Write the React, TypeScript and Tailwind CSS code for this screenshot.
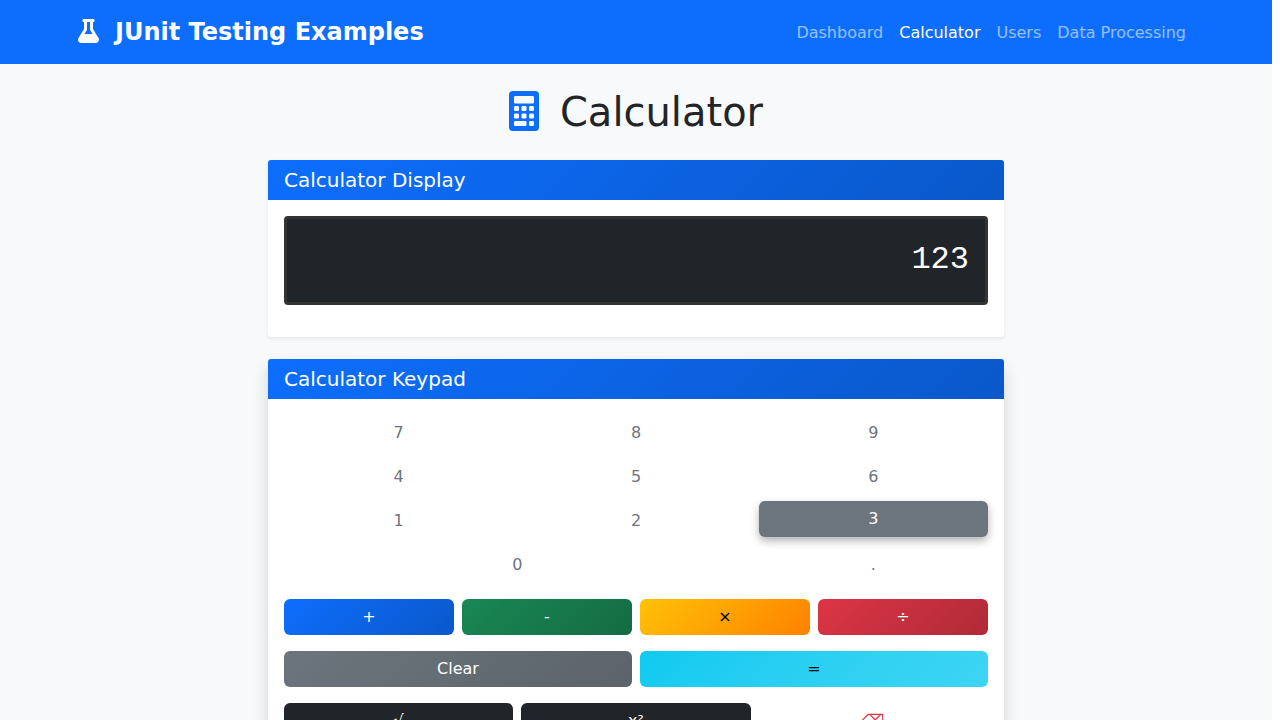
import { useState } from "react";
import type { ReactNode } from "react";

const NAV_LINKS = ["Dashboard", "Calculator", "Users", "Data Processing"];

const KEYS = [
  { label: "7", span: "" },
  { label: "8", span: "" },
  { label: "9", span: "" },
  { label: "4", span: "" },
  { label: "5", span: "" },
  { label: "6", span: "" },
  { label: "1", span: "" },
  { label: "2", span: "" },
  { label: "3", span: "" },
  { label: "0", span: "col-span-2" },
  { label: ".", span: "" },
];

const OPERATORS = [
  { label: "+", name: "Add", style: "bg-linear-135 from-[#0d6efd] to-[#0a58ca] text-white" },
  { label: "-", name: "Subtract", style: "bg-linear-135 from-[#198754] to-[#146c43] text-white" },
  { label: "×", name: "Multiply", style: "bg-linear-135 from-[#ffc107] to-[#ff8000] text-black" },
  { label: "÷", name: "Divide", style: "bg-linear-135 from-[#dc3545] to-[#b02a37] text-white" },
];

const BUTTON = "h-9 rounded-md text-base leading-6 cursor-pointer";
const ACTIVE_KEY = "relative -top-0.5 bg-[#6c757d] text-white shadow-[0_4px_8px_rgba(0,0,0,0.3)]";

function FlaskIcon() {
  return (
    <svg viewBox="0 0 448 512" className="h-6 w-[21px]" fill="currentColor" aria-hidden="true">
      <path d="M437.2 403.5L320 215V64h8c13.3 0 24-10.7 24-24V24c0-13.3-10.7-24-24-24H120c-13.3 0-24 10.7-24 24v16c0 13.3 10.7 24 24 24h8v151L10.8 403.5C-18.5 450.6 15.3 512 70.9 512h306.2c55.7 0 89.4-61.5 60.1-108.5zM137.9 320l48.2-77.6c3.7-5.2 5.8-11.6 5.8-18.4V64h64v160c0 6.9 2.2 13.2 5.8 18.4l48.2 77.6h-172z" />
    </svg>
  );
}

function CalculatorIcon() {
  return (
    <svg viewBox="0 0 384 512" className="h-10 w-[30px] text-[#0d6efd]" aria-hidden="true">
      <rect width="384" height="512" rx="48" fill="currentColor" />
      <g fill="#f8f9fa">
        <rect x="64" y="64" width="256" height="96" rx="16" />
        <rect x="64" y="192" width="64" height="64" rx="16" />
        <rect x="160" y="192" width="64" height="64" rx="16" />
        <rect x="256" y="192" width="64" height="64" rx="16" />
        <rect x="64" y="288" width="64" height="64" rx="16" />
        <rect x="160" y="288" width="64" height="64" rx="16" />
        <rect x="256" y="288" width="64" height="64" rx="16" />
        <rect x="64" y="384" width="160" height="64" rx="16" />
        <rect x="256" y="384" width="64" height="64" rx="16" />
      </g>
    </svg>
  );
}

function Card({ title, shadow, children }: { title: string; shadow: string; children: ReactNode }) {
  return (
    <section className={`rounded bg-white ${shadow}`}>
      <header className="rounded-t-[3px] bg-linear-135 from-[#0d6efd] to-[#0a58ca] px-4 py-2 text-white">
        <h2 className="text-xl leading-6">{title}</h2>
      </header>
      {children}
    </section>
  );
}

export default function App() {
  const [value, setValue] = useState("123");
  const active = value.slice(-1);

  return (
    <div className="h-screen overflow-hidden bg-white pr-2 font-['DejaVu_Sans',sans-serif] text-base text-[#212529]">
      <div className="min-h-full bg-[#f8f9fa]">
        <nav className="bg-[#0d6efd]">
          <div className="mx-auto flex h-16 max-w-[1140px] items-center justify-between px-3">
            <a href="#home" className="flex items-center gap-4 text-2xl font-bold text-white">
              <span className="pb-0.5">
                <FlaskIcon />
              </span>
              JUnit Testing Examples
            </a>
            <ul className="flex pt-0.5">
              {NAV_LINKS.map((link) => (
                <li key={link}>
                  <a
                    href={`#${link}`}
                    className={link === "Calculator" ? "px-2 text-white" : "px-2 text-white/55"}
                  >
                    {link}
                  </a>
                </li>
              ))}
            </ul>
          </div>
        </nav>

        <main className="mx-auto max-w-[760px] px-3 py-6">
          <h1 className="mb-6 flex items-center justify-center gap-[21px] text-[40px] leading-12">
            <span className="pb-0.5">
              <CalculatorIcon />
            </span>
            Calculator
          </h1>

          <div className="flex flex-col gap-[22px]">
            <Card title="Calculator Display" shadow="shadow-[0_2px_4px_rgba(0,0,0,0.075)]">
              <div className="px-4 pt-4 pb-8">
                <input
                  aria-label="Display"
                  readOnly
                  value={value}
                  className="block h-[89px] w-full rounded border-3 border-[#333333] bg-[#212529] px-4 pb-0.5 text-right font-['Liberation_Mono',monospace] text-[32px] text-white outline-none"
                />
              </div>
            </Card>

            <Card title="Calculator Keypad" shadow="shadow-[0_8px_16px_rgba(0,0,0,0.15)]">
              <div className="flex flex-col gap-4 p-4">
                <div className="grid grid-cols-3 gap-2">
                  {KEYS.map((key) => (
                    <button
                      key={key.label}
                      type="button"
                      onClick={() => setValue(value + key.label)}
                      className={`${BUTTON} ${key.span} ${key.label === active ? ACTIVE_KEY : "text-[#6c757d]"}`}
                    >
                      {key.label}
                    </button>
                  ))}
                </div>
                <div className="grid grid-cols-4 gap-2">
                  {OPERATORS.map((op) => (
                    <button key={op.label} type="button" aria-label={op.name} className={`${BUTTON} ${op.style}`}>
                      {op.label}
                    </button>
                  ))}
                </div>
                <div className="grid grid-cols-2 gap-2">
                  <button
                    type="button"
                    onClick={() => setValue("0")}
                    className={`${BUTTON} bg-linear-135 from-[#6c757d] to-[#5c636a] text-white`}
                  >
                    Clear
                  </button>
                  <button
                    type="button"
                    aria-label="Equals"
                    className={`${BUTTON} bg-linear-135 from-[#0dcaf0] to-[#3dd5f3] text-black`}
                  >
                    =
                  </button>
                </div>
                <div className="grid grid-cols-3 gap-2">
                  <button type="button" aria-label="Square root" className={`${BUTTON} bg-[#212529] text-white`}>
                    √
                  </button>
                  <button type="button" aria-label="Square" className={`${BUTTON} bg-[#212529] text-white`}>
                    x²
                  </button>
                  <button
                    type="button"
                    aria-label="Backspace"
                    onClick={() => setValue(value.slice(0, -1) || "0")}
                    className={`${BUTTON} text-[#dc3545]`}
                  >
                    ⌫
                  </button>
                </div>
              </div>
            </Card>
          </div>
        </main>
      </div>
    </div>
  );
}
